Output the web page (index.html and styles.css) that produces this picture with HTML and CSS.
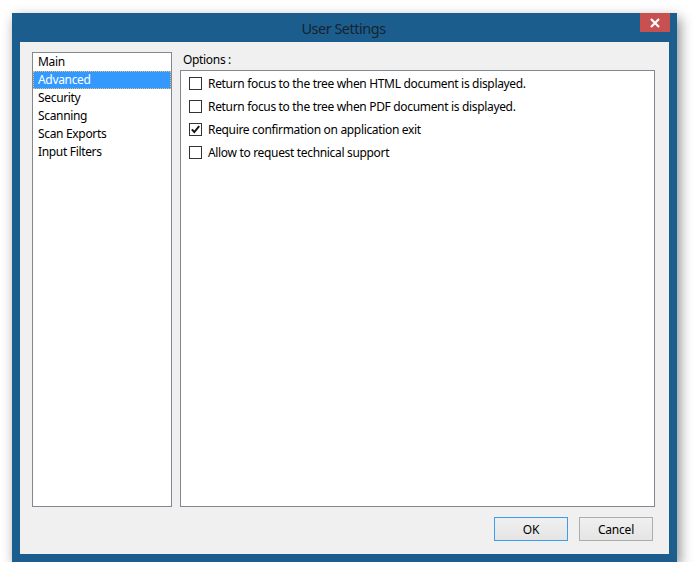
FILE: index.html
```html
<!DOCTYPE html>
<html>
<head>
<meta charset="utf-8">
<link rel="stylesheet" href="styles.css">
</head>
<body>
<div class="window">
  <div class="titlebar">
    <span class="title">User Settings</span>
    <div class="close"><svg width="12" height="12" viewBox="0 0 12 12"><path d="M2 2 L10 10 M10 2 L2 10" stroke="#fff" stroke-width="2.2"/></svg></div>
  </div>
  <div class="client">
    <div class="main">
      <ul class="list">
        <li>Main</li>
        <li class="sel">Advanced</li>
        <li>Security</li>
        <li>Scanning</li>
        <li>Scan Exports</li>
        <li>Input Filters</li>
      </ul>
      <div class="right">
        <div class="label">Options :</div>
        <div class="options">
          <div class="row"><span class="cb"></span><span>Return focus to the tree when HTML document is displayed.</span></div>
          <div class="row"><span class="cb"></span><span>Return focus to the tree when PDF document is displayed.</span></div>
          <div class="row"><span class="cb"><svg width="11" height="11" viewBox="0 0 11 11"><path d="M1.8 5.4 L4.3 8 L9.2 2.2" fill="none" stroke="#111" stroke-width="1.9"/></svg></span><span>Require confirmation on application exit</span></div>
          <div class="row"><span class="cb"></span><span>Allow to request technical support</span></div>
        </div>
      </div>
    </div>
    <div class="buttons">
      <button class="btn default">OK</button>
      <button class="btn">Cancel</button>
    </div>
  </div>
</div>
</body>
</html>
```
FILE: styles.css
```css
html, body {
  margin: 0;
  padding: 0;
  background: #ffffff;
}
body {
  font-family: "Noto Sans", "Open Sans", sans-serif;
  font-size: 12px;
  letter-spacing: -0.33px;
  color: #000;
}
.window {
  margin: 13px 0 0 12px;
  width: 665px;
  height: 549px;
  background: #1b5e8e;
  box-shadow: 3px 5px 12px rgba(0,0,0,0.45);
  position: relative;
  display: flex;
  flex-direction: column;
}
.titlebar {
  height: 29px;
  display: flex;
  align-items: center;
  justify-content: center;
}
.title {
  font-size: 14.5px;
  letter-spacing: -0.5px;
  color: #17232f;
  margin-top: 1px;
  margin-left: -2px;
}
.close {
  position: absolute;
  right: 7px;
  top: 0;
  width: 30px;
  height: 19px;
  background: #c75050;
  display: flex;
  align-items: center;
  justify-content: center;
}
.client {
  margin: 0 8px 8px 8px;
  flex: 1;
  background: #f0f0f0;
  padding: 10px 14px 13px 12px;
  display: flex;
  flex-direction: column;
}
.main {
  display: flex;
  height: 455px;
  gap: 8px;
}
.list {
  margin: 0;
  padding: 0;
  list-style: none;
  width: 138px;
  border: 1px solid #828790;
  background: #fff;
}
.list li {
  height: 18px;
  line-height: 18px;
  padding-left: 5px;
  box-sizing: border-box;
}
.list li.sel {
  background: #3399ff;
  color: #fff;
  outline: 1px dotted #e8c070;
  outline-offset: -1px;
}
.right {
  flex: 1;
  display: flex;
  flex-direction: column;
}
.label {
  height: 18px;
  line-height: 16px;
  padding-left: 3px;
}
.options {
  flex: 1;
  border: 1px solid #828790;
  background: #fff;
  padding: 1px 0 0 8px;
}
.row {
  height: 23px;
  display: flex;
  align-items: center;
  gap: 6px;
}
.cb {
  width: 11px;
  height: 11px;
  border: 1px solid #333;
  background: #fff;
  display: flex;
  flex: none;
}
.buttons {
  margin-top: 10px;
  display: flex;
  justify-content: flex-end;
  gap: 11px;
  padding-right: 2px;
}
.btn {
  width: 74px;
  height: 24px;
  font-family: "Noto Sans", "Open Sans", sans-serif;
  font-size: 12px;
  letter-spacing: -0.2px;
  background: linear-gradient(#f0f0f0, #e5e5e5);
  border: 1px solid #adadad;
  padding: 0;
  color: #000;
}
.btn.default {
  border-color: #3c9cf0;
}
```
